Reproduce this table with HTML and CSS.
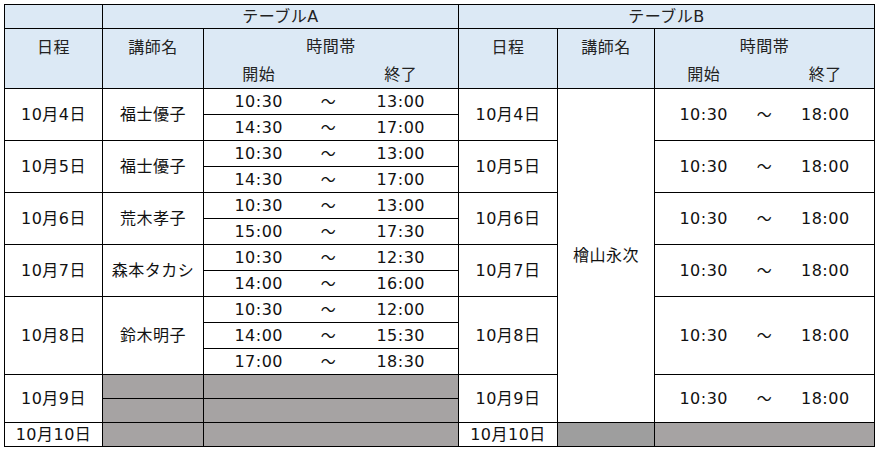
FILE: index.html
```html
<!DOCTYPE html>
<html lang="ja">
<head>
<meta charset="utf-8">
<title>スケジュール</title>
<link rel="stylesheet" href="styles.css">
</head>
<body>
<table class="sched">
  <colgroup>
    <col class="w-date-a"><col class="w-name-a"><col class="w-s-a"><col class="w-t-a"><col class="w-e-a">
    <col class="w-date-b"><col class="w-name-b"><col class="w-s-b"><col class="w-t-b"><col class="w-e-b">
  </colgroup>
  <thead>
    <tr class="h1">
      <th></th>
      <th colspan="4">テーブルA</th>
      <th colspan="5">テーブルB</th>
    </tr>
    <tr class="h2">
      <th rowspan="2" class="top">日程</th>
      <th rowspan="2" class="top">講師名</th>
      <th colspan="3" class="band">時間帯</th>
      <th rowspan="2" class="top">日程</th>
      <th rowspan="2" class="top">講師名</th>
      <th colspan="3" class="band">時間帯</th>
    </tr>
    <tr class="h3">
      <th class="s sub">開始</th><th class="t sub"></th><th class="e sub">終了</th>
      <th class="s sub">開始</th><th class="t sub"></th><th class="e sub">終了</th>
    </tr>
  </thead>
  <tbody>
    <tr class="r">
      <td rowspan="2">10月4日</td><td rowspan="2">福士優子</td>
      <td class="s">10:30</td><td class="t">～</td><td class="e">13:00</td>
      <td rowspan="2">10月4日</td><td rowspan="13">檜山永次</td>
      <td rowspan="2" class="s">10:30</td><td rowspan="2" class="t">～</td><td rowspan="2" class="e">18:00</td>
    </tr>
    <tr class="r">
      <td class="s">14:30</td><td class="t">～</td><td class="e">17:00</td>
    </tr>
    <tr class="r">
      <td rowspan="2">10月5日</td><td rowspan="2">福士優子</td>
      <td class="s">10:30</td><td class="t">～</td><td class="e">13:00</td>
      <td rowspan="2">10月5日</td>
      <td rowspan="2" class="s">10:30</td><td rowspan="2" class="t">～</td><td rowspan="2" class="e">18:00</td>
    </tr>
    <tr class="r">
      <td class="s">14:30</td><td class="t">～</td><td class="e">17:00</td>
    </tr>
    <tr class="r">
      <td rowspan="2">10月6日</td><td rowspan="2">荒木孝子</td>
      <td class="s">10:30</td><td class="t">～</td><td class="e">13:00</td>
      <td rowspan="2">10月6日</td>
      <td rowspan="2" class="s">10:30</td><td rowspan="2" class="t">～</td><td rowspan="2" class="e">18:00</td>
    </tr>
    <tr class="r">
      <td class="s">15:00</td><td class="t">～</td><td class="e">17:30</td>
    </tr>
    <tr class="r">
      <td rowspan="2">10月7日</td><td rowspan="2">森本タカシ</td>
      <td class="s">10:30</td><td class="t">～</td><td class="e">12:30</td>
      <td rowspan="2">10月7日</td>
      <td rowspan="2" class="s">10:30</td><td rowspan="2" class="t">～</td><td rowspan="2" class="e">18:00</td>
    </tr>
    <tr class="r">
      <td class="s">14:00</td><td class="t">～</td><td class="e">16:00</td>
    </tr>
    <tr class="r">
      <td rowspan="3">10月8日</td><td rowspan="3">鈴木明子</td>
      <td class="s">10:30</td><td class="t">～</td><td class="e">12:00</td>
      <td rowspan="3">10月8日</td>
      <td rowspan="3" class="s">10:30</td><td rowspan="3" class="t">～</td><td rowspan="3" class="e">18:00</td>
    </tr>
    <tr class="r">
      <td class="s">14:00</td><td class="t">～</td><td class="e">15:30</td>
    </tr>
    <tr class="r">
      <td class="s">17:00</td><td class="t">～</td><td class="e">18:30</td>
    </tr>
    <tr class="rs">
      <td rowspan="2">10月9日</td><td class="gray"></td><td colspan="3" class="gray"></td>
      <td rowspan="2">10月9日</td>
      <td rowspan="2" class="s">10:30</td><td rowspan="2" class="t">～</td><td rowspan="2" class="e">18:00</td>
    </tr>
    <tr class="rs">
      <td class="gray"></td><td colspan="3" class="gray"></td>
    </tr>
    <tr class="rs">
      <td>10月10日</td><td class="gray"></td><td colspan="3" class="gray"></td>
      <td>10月10日</td><td class="gray2"></td><td colspan="3" class="gray"></td>
    </tr>
  </tbody>
</table>
</body>
</html>
```
FILE: styles.css
```css
html, body {
  margin: 0;
  padding: 0;
  background: #ffffff;
}

body {
  font-family: "DejaVu Sans", "Noto Sans CJK JP", sans-serif;
  color: #111111;
}

.sched {
  margin: 4px 0 0 4px;
  border-collapse: collapse;
  table-layout: fixed;
  width: 871px;
  font-size: 16px;
  letter-spacing: 0.5px;
}

.w-date-a { width: 98px; }
.w-name-a { width: 101px; }
.w-s-a { width: 110px; }
.w-t-a { width: 30px; }
.w-e-a { width: 115px; }
.w-date-b { width: 99px; }
.w-name-b { width: 97px; }
.w-s-b { width: 98px; }
.w-t-b { width: 24px; }
.w-e-b { width: 98px; }

.sched th,
.sched td {
  border: 1px solid #000000;
  padding: 0;
  text-align: center;
  vertical-align: middle;
  line-height: 18px;
  white-space: nowrap;
  overflow: hidden;
}

.sched th {
  background: #dce9f5;
  font-weight: normal;
  color: #222222;
}

.h1 { height: 24px; }
.h2 { height: 30px; }
.h3 { height: 30px; }
.r { height: 26px; }
.rs { height: 24px; }

.sched th.top {
  vertical-align: top;
  padding-top: 10px;
}

.sched th.band {
  border-bottom: none;
  padding-top: 7px;
}

.sched th.sub {
  border-top: none;
  padding-top: 3px;
}

.sched .s { border-right: none; }
.sched .t { border-left: none; border-right: none; }
.sched .e { border-left: none; }

.sched td.t { font-size: 15px; }

.sched td.gray { background: #a6a3a3; }
.sched td.gray2 { background: #9e9e9e; }
```
